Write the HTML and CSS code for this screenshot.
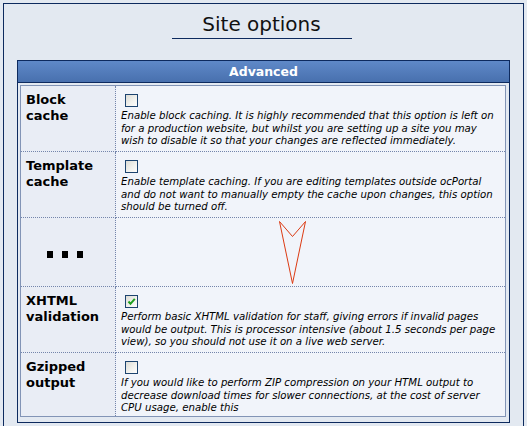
FILE: index.html
```html
<!DOCTYPE html>
<html>
<head>
<meta charset="utf-8">
<title>Site options</title>
<link rel="stylesheet" href="styles.css">
</head>
<body>
<div class="frame">
  <h1 class="title">Site options</h1>
  <div class="section">
    <div class="section-head">Advanced</div>
    <table class="options">
      <tr>
        <th>Block cache</th>
        <td>
          <span class="cb"></span>
          <p class="desc">Enable block caching. It is highly recommended that this option is left on<br>for a production website, but whilst you are setting up a site you may<br>wish to disable it so that your changes are reflected immediately.</p>
        </td>
      </tr>
      <tr>
        <th>Template cache</th>
        <td>
          <span class="cb"></span>
          <p class="desc">Enable template caching. If you are editing templates outside ocPortal<br>and do not want to manually empty the cache upon changes, this option<br>should be turned off.</p>
        </td>
      </tr>
      <tr class="gap-row">
        <th class="dots-cell"><span class="dots"><i></i><i></i><i></i></span></th>
        <td class="arrow-cell">
          <svg class="arrow" width="30" height="66" viewBox="0 0 30 66"><polygon points="2.5,2.5 15.5,17.5 28.5,2.5 15.5,64.5" fill="none" stroke="#dc3a12" stroke-width="1"/></svg>
        </td>
      </tr>
      <tr>
        <th>XHTML validation</th>
        <td>
          <span class="cb checked"><svg width="11" height="11" viewBox="0 0 11 11"><path d="M2.5 5.5 L4.5 7.8 L8.8 2.8" fill="none" stroke="#1fa01f" stroke-width="2"/></svg></span>
          <p class="desc">Perform basic XHTML validation for staff, giving errors if invalid pages<br>would be output. This is processor intensive (about 1.5 seconds per page<br>view), so you should not use it on a live web server.</p>
        </td>
      </tr>
      <tr class="last">
        <th>Gzipped output</th>
        <td>
          <span class="cb"></span>
          <p class="desc">If you would like to perform ZIP compression on your HTML output to<br>decrease download times for slower connections, at the cost of server<br>CPU usage, enable this</p>
        </td>
      </tr>
    </table>
  </div>
</div>
</body>
</html>
```
FILE: styles.css
```css
html, body {
  margin: 0;
  padding: 0;
  background: #e3e9f1;
}

body {
  font-family: "DejaVu Sans", Verdana, sans-serif;
  color: #000;
}

.frame {
  margin: 3px 3px 0 3px;
  border: 1px solid #0d2a5e;
  background: #e3e9f1;
  padding: 0 13px 20px 13px;
  height: 440px;
  box-sizing: border-box;
}

.title {
  width: 180px;
  margin: 8px auto 0 auto;
  padding: 0 0 2px 0;
  border-bottom: 1px solid #0d2a5e;
  font-size: 20px;
  line-height: 24px;
  font-weight: normal;
  text-align: center;
  color: #111;
  position: relative;
  left: -2px;
}

.section {
  margin-top: 21px;
  border: 1px solid #0d2a5e;
  padding: 0 3px 5px 2px;
  margin-left: 0;
  margin-right: 0;
}

.section-head {
  margin: 0 -3px 2px -2px;
  height: 21px;
  line-height: 21px;
  border-bottom: 1px solid #0d2a5e;
  background: linear-gradient(to bottom, #5f89c8, #4870ae);
  color: #fff;
  font-weight: bold;
  font-size: 12.5px;
  text-align: center;
}

.options {
  border-collapse: separate;
  border-spacing: 0;
  border: 1px solid #8294b6;
  width: 486px;
}

.options th,
.options td {
  border-bottom: 1px dotted #7485ab;
  vertical-align: top;
}

.options tr.last th,
.options tr.last td {
  border-bottom: none;
}

.options th {
  box-sizing: border-box;
  width: 95px;
  padding: 6px 8px 0 5px;
  border-right: 1px dotted #7485ab;
  background: #e9edf5;
  text-align: left;
  font-size: 13px;
  line-height: 16px;
  font-weight: bold;
}

.options td {
  background: #f1f4fa;
  padding: 8px 4px 3.5px 5px;
}

.options tr.last td {
  padding-bottom: 1.5px;
}

.cb {
  display: block;
  box-sizing: border-box;
  width: 13px;
  height: 13px;
  margin: 0 0 3px 4px;
  border: 1px solid #1d446f;
  background: linear-gradient(135deg, #dcdcd5 0%, #f3f3ef 60%, #fdfdfd 100%);
}

.cb svg {
  display: block;
}

.desc {
  margin: 0;
  font-size: 10.2px;
  line-height: 12.5px;
  font-style: italic;
  white-space: nowrap;
}

.gap-row th.dots-cell {
  vertical-align: middle;
  padding: 0 0 0 26px;
}

.dots {
  display: flex;
  gap: 9px;
  padding-top: 4px;
}

.dots i {
  display: block;
  width: 6px;
  height: 7px;
  background: #000;
}

.gap-row td.arrow-cell {
  padding: 1px 0 1px 161px;
}

.arrow {
  display: block;
}
```
